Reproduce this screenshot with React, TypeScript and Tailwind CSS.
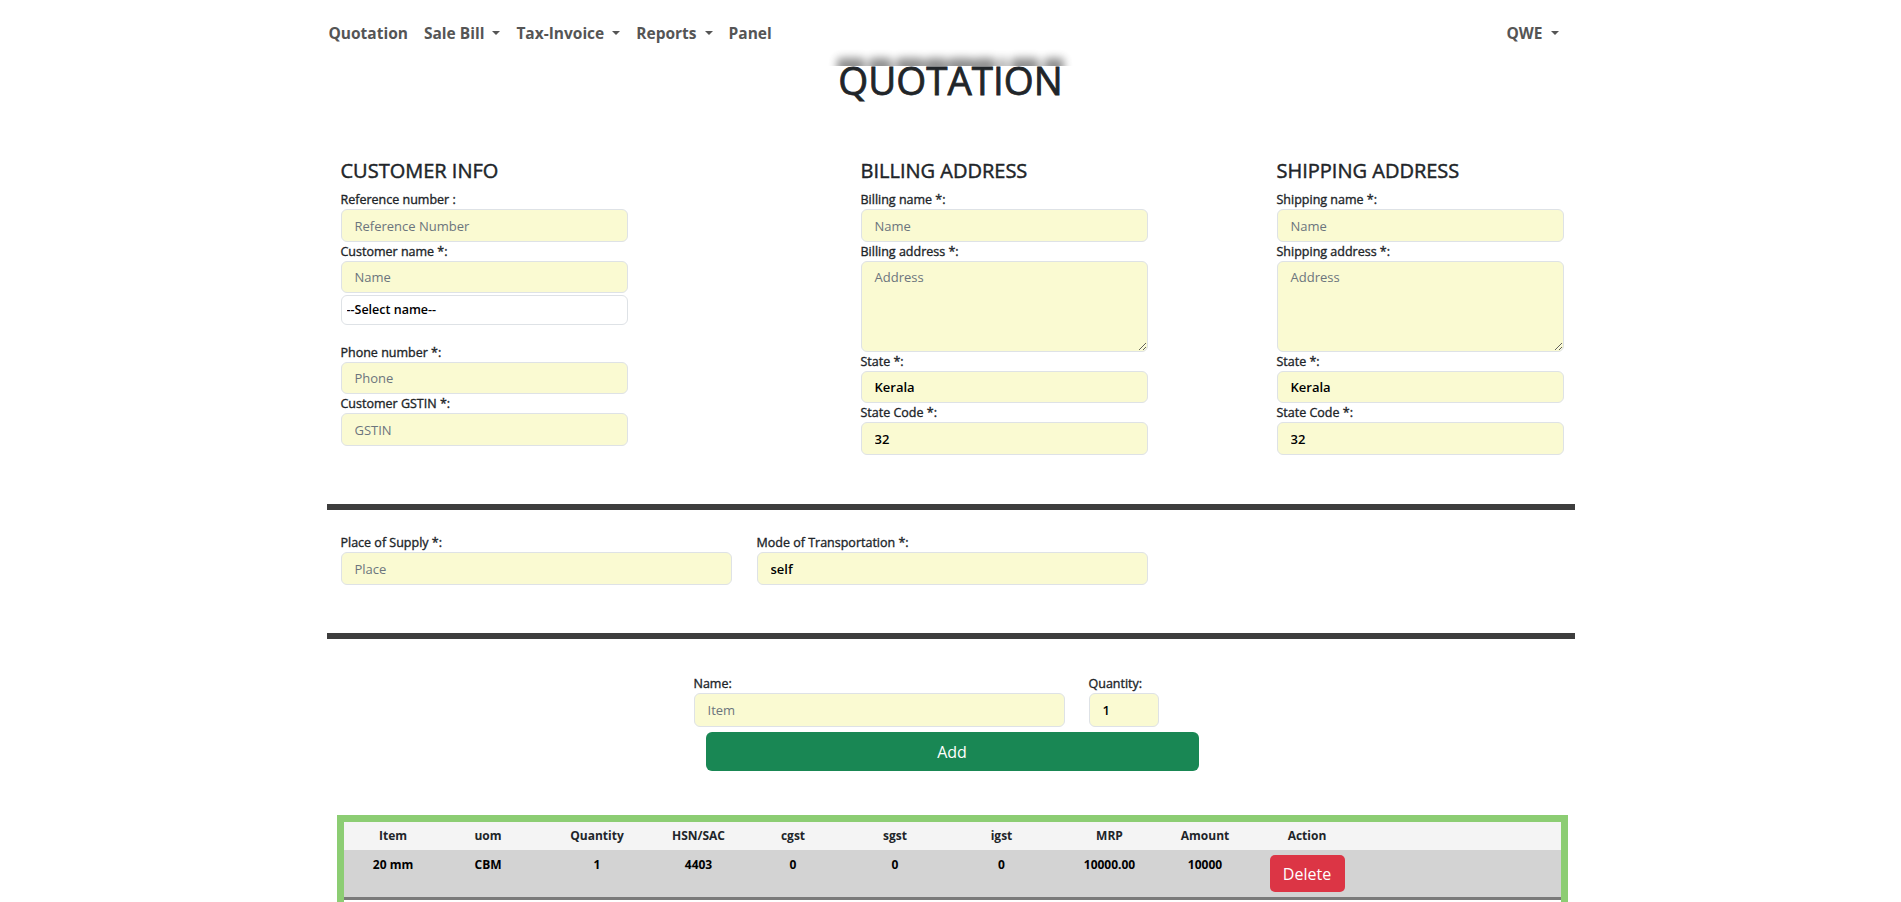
import React from "react";

const baseInput =
  "block rounded-[6px] border border-[#dee2e6] bg-[#fafad2] pl-[13px] text-[13px] font-semibold text-black placeholder:font-normal placeholder:text-[#6c757d] outline-none";

function Label({ children }: { children: React.ReactNode }) {
  return (
    <div className="h-[19px] text-[12.5px] leading-[19px] font-normal [-webkit-text-stroke:0.35px_#212529] text-[#212529] whitespace-nowrap">
      {children}
    </div>
  );
}

function Input({
  placeholder,
  value,
  size = "w-[287px] h-[33px]",
}: {
  placeholder?: string;
  value?: string;
  size?: string;
}) {
  return (
    <input
      className={baseInput + " " + size}
      placeholder={placeholder}
      defaultValue={value}
    />
  );
}

function Area({ placeholder }: { placeholder: string }) {
  return (
    <textarea
      className="block w-[287px] h-[91px] rounded-[6px] border border-[#dee2e6] bg-[#fafad2] pl-[13px] pt-[6px] text-[13px] leading-[19px] text-black placeholder:text-[#6c757d] outline-none"
      placeholder={placeholder}
    />
  );
}

function Heading({ children }: { children: React.ReactNode }) {
  return (
    <h5 className="text-[20px] leading-[24px] font-normal [-webkit-text-stroke:0.45px_#212529] text-[#212529] mb-[7px] whitespace-nowrap">
      {children}
    </h5>
  );
}

function Caret() {
  return (
    <span className="inline-block ml-[8px] align-middle -translate-y-[2px] w-0 h-0 border-t-[4px] border-t-[#555] border-x-[4px] border-x-transparent" />
  );
}

const cols = [
  "Item",
  "uom",
  "Quantity",
  "HSN/SAC",
  "cgst",
  "sgst",
  "igst",
  "MRP",
  "Amount",
  "Action",
];
const row = ["20 mm", "CBM", "1", "4403", "0", "0", "0", "10000.00", "10000"];

const blobs: [number, number][] = [
  [0, 28],
  [4, 23],
  [4, 28],
  [1, 22],
  [1, 26],
  [0, 22],
  [4, 6],
  [5, 28],
  [5, 20],
];

const gridCols =
  "grid grid-cols-[99px_91px_127px_76px_113px_91px_122px_94px_97px_107px_1fr]";

export default function App() {
  return (
    <div className="min-h-screen bg-white font-['Open_Sans',sans-serif] text-[#212529] pb-[60px]">
      <nav className="w-[1248px] mx-auto h-[56px] flex items-end justify-between pb-[11px]">
        <ul className="flex -ml-[6px] text-[15.5px] leading-[24px] font-bold text-[#555]">
          <li className="px-[8px]">Quotation</li>
          <li className="px-[8px]">
            Sale Bill
            <Caret />
          </li>
          <li className="px-[8px]">
            Tax-Invoice
            <Caret />
          </li>
          <li className="px-[8px]">
            Reports
            <Caret />
          </li>
          <li className="px-[8px]">Panel</li>
        </ul>
        <div className="mr-[8px] px-[8px] text-[15.5px] leading-[24px] font-bold text-[#555]">
          QWE
          <Caret />
        </div>
      </nav>

      <div className="w-[1248px] mx-auto">
        <div className="relative h-[48px]">
          <div aria-hidden className="absolute inset-x-0 top-[-12px] h-[22px] overflow-hidden">
            <div className="mx-auto mt-[14px] w-[227px] flex blur-[4px] opacity-80">
              {blobs.map(([ml, w], i) => (
                <div
                  key={i}
                  className="h-[16px] rounded-[4px] bg-[rgba(0,0,0,0.55)]"
                  style={{ marginLeft: ml, width: w }}
                />
              ))}
            </div>
          </div>
          <h1 className="relative text-center text-[38.5px] leading-[48px] font-normal [-webkit-text-stroke:0.8px_#212529] text-[#212529]">
            QUOTATION
          </h1>
        </div>

        <div className="mt-[55px] grid grid-cols-[520px_416px_312px]">
          <div className="pl-[14px]">
            <Heading>CUSTOMER INFO</Heading>
            <Label>Reference number :</Label>
            <Input placeholder="Reference Number" />
            <Label>Customer name *:</Label>
            <Input placeholder="Name" size="w-[287px] h-[32px]" />
            <select className="mt-[2px] block w-[287px] h-[30px] appearance-none rounded-[6px] border border-[#dee2e6] bg-white pl-[5px] text-[12.5px] font-semibold text-black outline-none">
              <option>--Select name--</option>
            </select>
            <div className="mt-[18px]">
              <Label>Phone number *:</Label>
            </div>
            <Input placeholder="Phone" size="w-[287px] h-[32px]" />
            <Label>Customer GSTIN *:</Label>
            <Input placeholder="GSTIN" />
          </div>

          <div className="pl-[14px]">
            <Heading>BILLING ADDRESS</Heading>
            <Label>Billing name *:</Label>
            <Input placeholder="Name" />
            <Label>Billing address *:</Label>
            <Area placeholder="Address" />
            <Label>State *:</Label>
            <Input value="Kerala" size="w-[287px] h-[32px]" />
            <Label>State Code *:</Label>
            <Input value="32" />
          </div>

          <div className="pl-[14px]">
            <Heading>SHIPPING ADDRESS</Heading>
            <Label>Shipping name *:</Label>
            <Input placeholder="Name" />
            <Label>Shipping address *:</Label>
            <Area placeholder="Address" />
            <Label>State *:</Label>
            <Input value="Kerala" size="w-[287px] h-[32px]" />
            <Label>State Code *:</Label>
            <Input value="32" />
          </div>
        </div>

        <div className="mt-[49px] h-[6px] bg-[#3d3d3d]" />

        <div className="mt-[23px] grid grid-cols-[416px_416px]">
          <div className="pl-[14px]">
            <Label>Place of Supply *:</Label>
            <Input placeholder="Place" size="w-[391px] h-[33px]" />
          </div>
          <div className="pl-[14px]">
            <Label>Mode of Transportation *:</Label>
            <Input value="self" size="w-[391px] h-[33px]" />
          </div>
        </div>

        <div className="mt-[48px] h-[6px] bg-[#3d3d3d]" />

        <div className="mt-[35px] ml-[367px] flex gap-[24px]">
          <div>
            <Label>Name:</Label>
            <Input placeholder="Item" size="w-[371px] h-[34px]" />
          </div>
          <div>
            <Label>Quantity:</Label>
            <Input value="1" size="w-[70px] h-[34px]" />
          </div>
        </div>
        <button className="mt-[5px] ml-[379px] block w-[493px] h-[39px] rounded-[6px] bg-[#198754] text-white text-[16px]">
          Add
        </button>

        <div className="mt-[44px] ml-[10px] w-[1231px] border-[7px] border-b-0 border-[#8ccd73] pb-[20px]">
          <div className={gridCols + " h-[28px] items-center bg-[#f4f4f4] text-[12px] font-bold text-[#212529]"}>
            {cols.map((c) => (
              <div key={c} className="text-center">
                {c}
              </div>
            ))}
            <div />
          </div>
          <div className={gridCols + " h-[50px] items-start bg-[#d3d3d3] border-b-[3px] border-[#7a7a7a] text-[12px] font-bold text-black"}>
            {row.map((c, i) => (
              <div key={i} className="text-center pt-[5px] leading-[20px]">
                {c}
              </div>
            ))}
            <div className="flex justify-center pt-[5px]">
              <button className="w-[75px] h-[37px] rounded-[5px] bg-[#dc3545] text-white text-[16px] font-normal">
                Delete
              </button>
            </div>
            <div />
          </div>
        </div>
      </div>
    </div>
  );
}
